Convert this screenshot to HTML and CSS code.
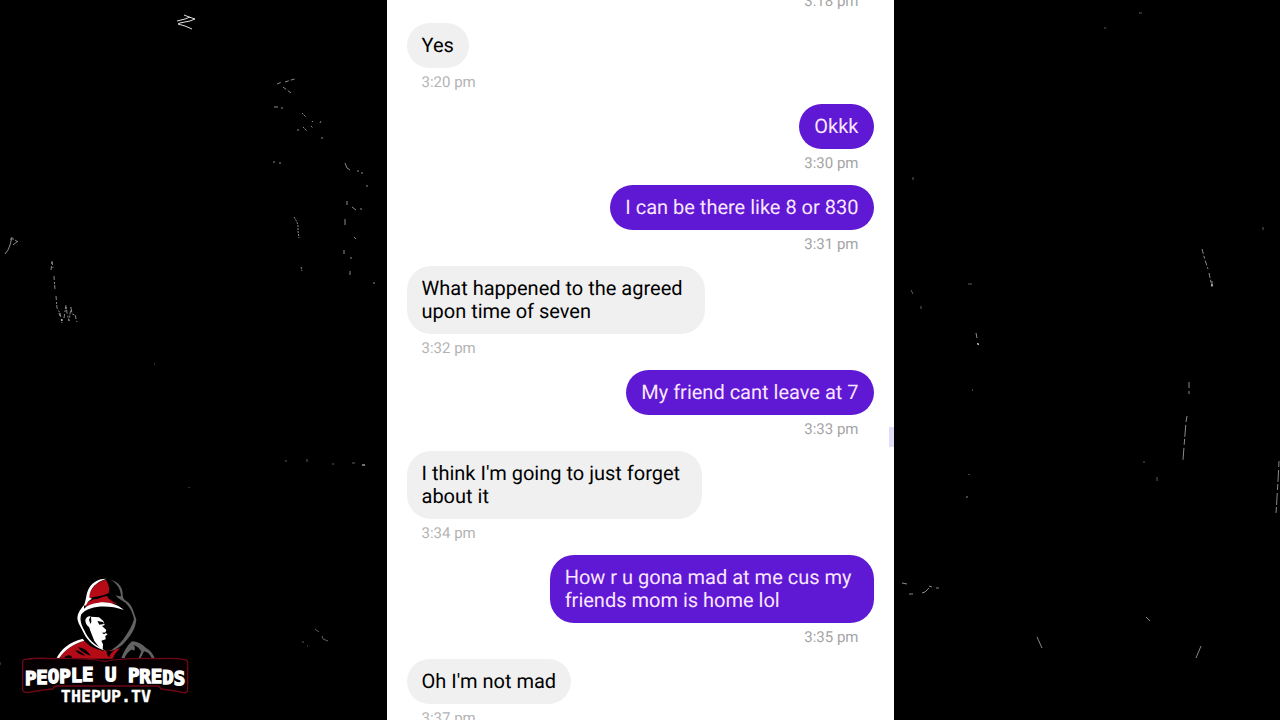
FILE: index.html
```
<!DOCTYPE html>
<html lang="en">
<head>
    <meta charset="UTF-8">
    <title>Chat - People U Preds</title>
    <meta name="viewport" content="width=device-width, initial-scale=1.0">
    <link rel="stylesheet" href="styles.css">
</head>
<body>
<svg class="scratches" viewBox="0 0 1280 720" preserveAspectRatio="none" aria-hidden="true">
    <path class="bright" d="M184 15l5 2 6 2-5 2-10 2-2 1 7 2 7 3m-2-12l-5 2-8 2"/>
    <g class="mid">
        <path d="M5 254l3-4 2-5 2-8m-2 2h4m-1 6l5-4m-3-1l3 2"/>
        <path d="M51 270l1-9 1 7m1 8l1 14m1 6l1 12 3 5 2 10m-3-10l1 3m4 2l2-13 1 8 2 8 2-14 1 7 3 1 2 7" stroke-dasharray="4 2 2 1"/>
        <path d="M277 84l5-2m3 0l6-2 4-1m-12 8l4 3 4 3m-17 14h4m3 1h2" stroke-dasharray="4 2"/>
        <path d="M302 113l4 4m6 4l1 1m-16 8l3 0m3-3l4 4m4-5l2 2m7-5l1-2m0 17h3" stroke-dasharray="2 1"/>
        <path d="M345 163l2 5 3 2m7 1h2m3 1v2m5 11v2m-20 14v4m5 2l4 3m4-1h2m-17 10v6m9 12l2 2m-12 11v4m7 3v2m-1 12v4m23 8h2"/>
        <path d="M294 217l3 5 1 4v5l1 7m2 29l1 4m-29-109h2m4 1h2" stroke-dasharray="2 1"/>
        <path d="M1202 249l3 11 3 9m1 4l3 14m0-6v5" stroke-dasharray="5 2 3 2"/>
        <path d="M1189 382v12m-2 22l-1 6-1 12-2 26m96 1l-1 20-2 33" stroke-dasharray="6 3 12 2"/>
        <path d="M902 583l5 1m2 10h4m9-1l3-1 4-4m7 0h3m-10-2l3 1" />
        <path d="M976 333l1 5m0 5l2 2m-10 129v1m-2 21v2m5-108h1"/>
        <path d="M1037 637l5 11m154 10l5-12m-55-29l4 4"/>
    </g>
    <g class="dim">
        <path d="M1157 477v4m-13-20v2M1139 13h3m-38 15h2M913 177v3m55 104h4m-59 10l-2-4m10 16v3"/>
        <path d="M315 629l4 3m3 4l1 3 5 2m-26 1h2m3 4h1m-1-187v3m45 1h3m-70-2h2m45 3h2"/>
        <path d="M1263 227v3M189 487v1M154 364h1M0 662v3"/>
    </g>
    <path class="bright" d="M978 343v2m234-61v2M362 465h3M62 319v2"/>
</svg>

<main class="chat">
    <ol class="messages">
        <li class="message sent"><time>3:18 pm</time></li>
        <li class="message">
            <p class="bubble">Yes</p>
            <time>3:20 pm</time>
        </li>
        <li class="message sent">
            <p class="bubble">Okkk</p>
            <time>3:30 pm</time>
        </li>
        <li class="message sent">
            <p class="bubble">I can be there like 8 or 830</p>
            <time>3:31 pm</time>
        </li>
        <li class="message">
            <p class="bubble multi">What happened to the agreed<br>upon time of seven</p>
            <time>3:32 pm</time>
        </li>
        <li class="message sent">
            <p class="bubble">My friend cant leave at 7</p>
            <time>3:33 pm</time>
        </li>
        <li class="message">
            <p class="bubble multi">I think I'm going to just forget<br>about it</p>
            <time>3:34 pm</time>
        </li>
        <li class="message sent">
            <p class="bubble multi">How r u gona mad at me cus my<br>friends mom is home lol</p>
            <time>3:35 pm</time>
        </li>
        <li class="message">
            <p class="bubble">Oh I'm not mad</p>
            <time>3:37 pm</time>
        </li>
    </ol>
    <span class="thumb"></span>
</main>

<svg class="logo" viewBox="0 0 570 435" role="img" aria-label="People U Preds, thepup.tv">
    <!-- shoulders -->
    <path fill="#b50b17" d="M148 266c14-24 38-42 74-54l18 16c14 8 30 14 50 15l40-8c-10 10-16 18-22 31z"/>
    <path fill="#000" d="M196 240c12 2 22 8 30 18-14-4-24-8-30-18zM204 232c16 2 28 8 38 26-16-6-30-14-38-26zM290 244l24-4c-8 6-14 12-16 22-6-4-8-10-8-18zM164 260c8-4 14-6 20-2l2 6h-22z"/>
    <path fill="#fff" d="M140 264c12-26 38-48 78-58l5 6c-34 10-58 26-75 52z"/>
    <path fill="#626262" d="M334 264c8-20 18-38 32-50 20 2 32 10 42 20 12 6 20 16 26 30h-9c-6-12-12-18-23-20l-10 20h-6l8-20c-6-10-14-16-24-20 6 8 6 12 2 18-4-4-8-4-12 0-8 6-12 12-16 22z"/>
    <!-- hood -->
    <path fill="#b50b17" d="M236 86c2-28 22-50 52-57 8 14 12 28 8 40-14 10-38 8-60 17z"/>
    <path fill="#b50b17" d="M226 114c2-16 14-24 31-26 16-2 20-10 36-9 0 8 12 14 30 24-36-8-64-6-97 11z"/>
    <path fill="#fff" d="M289 26c-28 0-48 14-57 40-4 12-4 26-10 40 2 2 4 0 6 0 4-10 10-16 18-20-5-2-8-2-8-6 2-26 20-44 51-54z"/>
    <path fill="#fff" d="M222 105c-14 16-22 30-19 46 3 14 12 24 18 38 12 24 32 44 68 54-38-18-56-38-65-60-10-18-16-34-10-50 22-26 78-30 128-13-22-18-50-26-76-22-20 2-34 8-44 18z"/>
    <path fill="#626262" d="M303 30c22 6 34 20 35 40 0 12 2 18 12 24 18 12 20 32 29 54-2 30-18 50-34 68-12 14-26 22-45 28 16-12 30-22 40-36 14-20 26-38 32-60-4-22-12-36-26-50-12-8-24-14-29-22 8 2 12 4 16 2-2-22-10-36-30-48z"/>
    <!-- face -->
    <path fill="#fff" d="M226 150c2-8 8-12 16-11l-5 10 5 16-6 6c-6-6-10-12-10-21zM243 140l24 2 13 11 4 12-8 3 13 12-3 8 7 5-7 5 1 10-13 4 5 11-1 17-11-9-14-18-12-31-4-12 7-14z"/>
    <path fill="#000" d="M262 153l17 3 3 6-14 2zM276 188l16-1-10 6z"/>
    <!-- name plate -->
    <path class="plate" d="M42 269c30-5 60-5 86-3 60-2 100-2 157 8 57-10 97-10 157-8 30-2 56-2 84 3q7 1 7 9v82q-2 10-12 8c-24-6-44-9-68-11q-4-9-12-9H142q-10 0-14 9c-26 2-48 6-74 11q-14 1-16-9v-81q0-8 4-9z"/>
    <text class="name" x="285" y="344" dy="0 -2 -2 -2 -2 -2 -1 0 1 2 2 2 2 2">PEOPLE U PREDS</text>
    <text class="site" x="288" y="396">THEPUP.TV</text>
</svg>
</body>
</html>
```
FILE: styles.css
```
body {
    margin: 0;
    height: 100vh;
    display: flex;
    justify-content: center;
    overflow: hidden;
    background: #000;
    font-family: Roboto, "Liberation Sans", sans-serif;
    text-rendering: geometricPrecision;
}

.scratches {
    position: absolute;
    top: 0;
    left: 0;
    width: 100%;
    height: 100%;
    fill: none;
    stroke-width: 1;
}

.bright {
    stroke: #e0e0e0;
}

.mid {
    stroke: #8a8a8a;
}

.dim {
    stroke: #5c5c5c;
}

.chat {
    position: relative;
    width: 100%;
    max-width: 507px;
    overflow: hidden;
    background: #fff;
}

.messages {
    display: flex;
    flex-direction: column;
    gap: 12px;
    margin: -9px 20px 0;
    padding: 0;
    list-style: none;
}

.message {
    display: flex;
    flex-direction: column;
    align-items: flex-start;
    gap: 4px;
}

.sent {
    align-items: flex-end;
}

.bubble {
    margin: 0;
    padding: 11px 15px;
    border-radius: 24px;
    background: #f0f0f0;
    color: #000;
    font-size: 20px;
    line-height: 23px;
}

.multi {
    padding-right: 22px;
}

.sent .bubble {
    background: #5f18d4;
    color: #fbe6ff;
}

.message time {
    padding: 0 15px;
    color: #b4b4b4;
    font-size: 15px;
    line-height: 20px;
}

.sent time {
    color: #a4a4a4;
}

.thumb {
    position: absolute;
    top: 427px;
    right: 0;
    width: 5px;
    height: 20px;
    background: #e2dcf8;
}

.logo {
    position: absolute;
    left: 10px;
    bottom: 5px;
    width: 190px;
    height: 145px;
}

.plate {
    fill: #060003;
    stroke: #6d0718;
    stroke-width: 4;
}

.name,
.site {
    fill: #fff;
    stroke: #fff;
    text-anchor: middle;
    font-family: "DejaVu Sans Mono", monospace;
    font-weight: bold;
}

.name {
    stroke-width: 4;
    font-size: 57px;
}

.site {
    stroke-width: 1;
    font-size: 50px;
}
```
